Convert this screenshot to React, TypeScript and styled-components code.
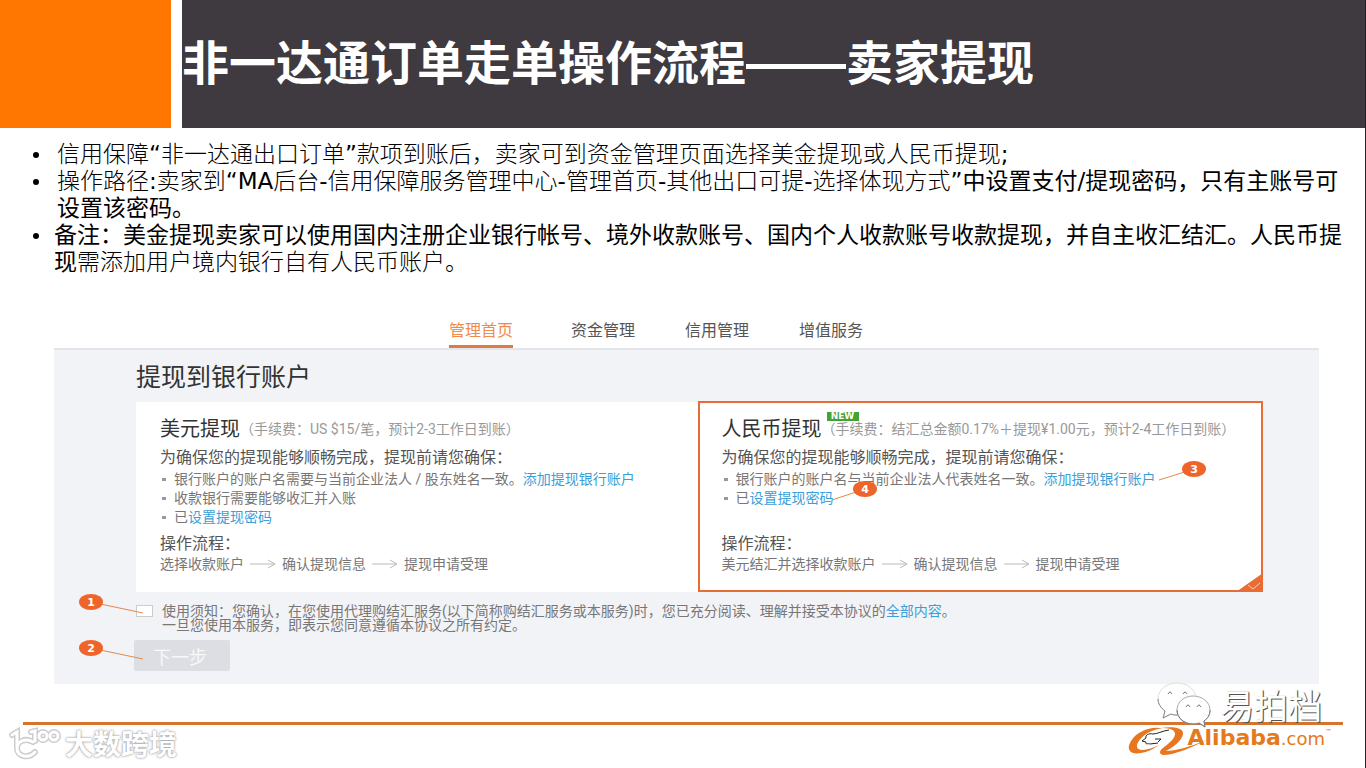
import React from 'react';
import styled, { createGlobalStyle } from 'styled-components';

const cjk = '"Noto Sans CJK SC", sans-serif';

const GlobalStyle = createGlobalStyle`
  * { box-sizing: border-box; }
  body {
    margin: 0;
    background: #fff;
    color: #000;
    font-family: "DejaVu Sans", ${cjk};
  }
  h1, h2, h3, p, ul, ol { margin: 0; padding: 0; }
  ul, ol { list-style: none; }
  a { text-decoration: none; }
`;

const Slide = styled.div`
  position: relative;
  min-height: 100vh;
  display: flex;
  flex-direction: column;
  border-right: 1px solid #222;
`;

const Header = styled.header`
  display: flex;
  gap: 11px;
  height: 128px;
`;

const Accent = styled.div`
  flex: 0 0 171px;
  background: #ff7600;
`;

const TitleBar = styled.div`
  flex: 1;
  padding-top: 26px;
  background: #3e3a40;
`;

const Title = styled.h1`
  color: #fff;
  font: 700 47px/68px ${cjk};
  white-space: nowrap;
`;

const Dash = styled.span`
  font-family: "Liberation Sans", sans-serif;
  font-size: 50px;
  line-height: 1;
`;

const Notes = styled.ul`
  padding: 13px 0 0 30px;
  font-size: 23px;
  line-height: 27px;
`;

const Note = styled.li<{ $indent: number }>`
  position: relative;
  padding-left: ${(p) => p.$indent}px;
  white-space: nowrap;
  font-weight: 300;
  &::before {
    content: '';
    position: absolute;
    left: 3px;
    top: 11px;
    width: 6px;
    height: 6px;
    border-radius: 50%;
    background: #000;
  }
`;

const Strong = styled.span`
  font-weight: 400;
`;

const Shot = styled.section`
  margin: 38px 46px 0 54px;
  font-family: Roboto, ${cjk};
  font-size: 14px;
  line-height: 18px;
  color: #777;
`;

const Tabs = styled.nav`
  display: flex;
  gap: 50px;
  padding-left: 395px;
  height: 34px;
`;

const Tab = styled.a<{ $active?: boolean }>`
  width: 64px;
  padding-top: 6px;
  font-size: 16px;
  line-height: 22px;
  white-space: nowrap;
  color: ${(p) => (p.$active ? '#f08a4b' : '#555')};
  border-bottom: 3px solid ${(p) => (p.$active ? '#e07b45' : 'transparent')};
  &:first-child { margin-right: 8px; }
`;

const Panel = styled.div`
  position: relative;
  height: 336px;
  padding: 16px 56px 0 82px;
  background: #f2f3f7;
  border-top: 2px solid #e4e5e8;
`;

const PanelTitle = styled.h2`
  color: #333;
  font-size: 25px;
  font-weight: 400;
  line-height: 24px;
`;

const Cards = styled.div`
  display: grid;
  grid-template-columns: 1fr 1fr;
  height: 190px;
  margin-top: 12px;
`;

const Card = styled.article<{ $selected?: boolean }>`
  position: relative;
  padding: ${(p) => (p.$selected ? 13 : 12)}px 0 0 22px;
  margin: ${(p) => (p.$selected ? '-1px 0 0 -2px' : 0)};
  background: #fff;
  border: 2px solid ${(p) => (p.$selected ? '#e96c35' : '#fff')};
  white-space: nowrap;
`;

const CardHead = styled.div`
  position: relative;
  display: flex;
  align-items: center;
  height: 26px;
`;

const CardTitle = styled.h3`
  color: #333;
  font-size: 20px;
  font-weight: 400;
`;

const Fee = styled.span`
  color: #999;
  font-size: 14px;
`;

const NewTag = styled.span`
  position: absolute;
  left: 105px;
  top: -4px;
  width: 32px;
  height: 9px;
  background: #43a234;
  color: #fff;
  font: 700 9px/9px "DejaVu Sans", sans-serif;
  text-align: center;
`;

const Lead = styled.p`
  color: #555;
  font-size: 16px;
  line-height: 20px;
  margin-top: 6px;
`;

const Points = styled.ul`
  height: 58px;
  margin-top: 2px;
`;

const Point = styled.li`
  position: relative;
  padding-left: 14px;
  line-height: 19px;
  &::before {
    content: '';
    position: absolute;
    left: 2px;
    top: 8px;
    width: 4px;
    height: 3px;
    background: #999;
  }
`;

const Link = styled.a`
  color: #3a9fd8;
`;

const Steps = styled.ol`
  display: flex;
  align-items: center;
  gap: 38px;
  margin-top: 1px;
`;

const Step = styled.li`
  position: relative;
`;

const ArrowMark = styled.svg`
  position: absolute;
  right: -32px;
  top: 4px;
`;

const Corner = styled.svg`
  position: absolute;
  right: -2px;
  bottom: -2px;
`;

const Agreement = styled.div`
  display: flex;
  gap: 9px;
  margin-top: 12px;
  line-height: 14px;
  white-space: nowrap;
`;

const Check = styled.input`
  appearance: none;
  width: 17px;
  height: 12px;
  margin: 1px 0 0;
  background: #fff;
  border: 1px solid #ccc;
`;

const Next = styled.button`
  display: block;
  width: 96px;
  height: 31px;
  margin: 8px 0 0 -2px;
  padding: 0 4px 0 0;
  border: 0;
  border-radius: 2px;
  background: #dcdee3;
  color: #f7f8fa;
  font: 400 18px/28px ${cjk};
`;

const Callout = styled.svg`
  position: absolute;
  overflow: visible;
  text {
    fill: #fff;
    font: 700 11px "DejaVu Sans", sans-serif;
    text-anchor: middle;
  }
`;

const Footer = styled.footer`
  position: relative;
  height: 84px;
  padding: 38px 22px 0 23px;
`;

const Rule = styled.div`
  height: 3px;
  background: #d9722a;
`;

const WeChatMark = styled.div`
  position: absolute;
  right: 43px;
  top: -4px;
  display: flex;
  align-items: center;
  gap: 8px;
  color: #fff;
  font: 400 34px/50px ${cjk};
  text-shadow: 1px 1px 0 #555, 1px 0 1px #888;
`;

const Alibaba = styled.div`
  position: absolute;
  right: 33px;
  top: 42px;
  display: flex;
  align-items: baseline;
  color: #e47a1c;
  font: 400 18px/24px "DejaVu Sans", sans-serif;
`;

const AlibabaMark = styled.svg`
  align-self: flex-start;
  overflow: visible;
`;

const Brand = styled.b`
  font-size: 22px;
`;

const Trade = styled.span`
  align-self: flex-start;
  font-size: 7px;
  line-height: 12px;
`;

const Cross = styled.div`
  position: absolute;
  left: 8px;
  top: 38px;
  display: flex;
  gap: 3px;
  align-items: center;
  color: #fff;
  font: 700 28px/42px ${cjk};
  text-shadow: 0 0 2px #999, 0 0 3px #bbb;
`;

const Arrow = () => (
  <ArrowMark width="26" height="10" viewBox="0 0 26 10" fill="none" stroke="#bbb" aria-hidden="true">
    <path d="M0 5H25M18 1L25 5L18 9" />
  </ArrowMark>
);

type PinProps = { n: number; x: number; y: number; dx: number; dy: number };

const Pin = ({ n, x, y, dx, dy }: PinProps) => (
  <Callout style={{ left: x, top: y }} width="1" height="1">
    <path d={`M0 0L${dx} ${dy}`} stroke="#e08a50" />
    <ellipse rx="12" ry="8" fill="#ed652b" />
    <text y="4">{n}</text>
  </Callout>
);

const crossStrokes = 'M4 10L9 7V22M25 17C17 12 9 17 9 23C9 32 21 34 27 27M23 7L27 6V16';

export default function App() {
  return (
    <Slide>
      <GlobalStyle />
      <Header>
        <Accent />
        <TitleBar>
          <Title>非一达通订单走单操作流程<Dash>——</Dash>卖家提现</Title>
        </TitleBar>
      </Header>

      <Notes>
        <Note $indent={27}>
          信用保障<Strong>“</Strong>非一达通出口订单<Strong>”</Strong>款项到账后，卖家可到资金管理页面选择美金提现或人民币提现<Strong>;</Strong>
        </Note>
        <Note $indent={27}>
          操作路径<Strong>:</Strong>卖家到<Strong>“MA</Strong>后台<Strong>-</Strong>信用保障服务管理中心<Strong>-</Strong>管理首页<Strong>-</Strong>其他出口可提<Strong>-</Strong>选择体现方式
          <Strong>”中设置支付/提现密码，只有主账号可<br />设置该密码。</Strong>
        </Note>
        <Note $indent={24}>
          <Strong>备注：美金提现卖家可以使用国内注册企业银行帐号、境外收款账号、国内个人收款账号收款提现，并自主收汇结汇。人民币提<br />现</Strong>
          需添加用户境内银行自有人民币账户。
        </Note>
      </Notes>

      <Shot>
        <Tabs>
          <Tab href="#home" $active>管理首页</Tab>
          <Tab href="#funds">资金管理</Tab>
          <Tab href="#credit">信用管理</Tab>
          <Tab href="#services">增值服务</Tab>
        </Tabs>
        <Panel>
          <PanelTitle>提现到银行账户</PanelTitle>
          <Cards>
            <Card>
              <CardHead>
                <CardTitle>美元提现</CardTitle>
                <Fee>（手续费：US $15/笔，预计2-3工作日到账）</Fee>
              </CardHead>
              <Lead>为确保您的提现能够顺畅完成，提现前请您确保：</Lead>
              <Points>
                <Point>银行账户的账户名需要与当前企业法人 / 股东姓名一致。<Link href="#account">添加提现银行账户</Link></Point>
                <Point>收款银行需要能够收汇并入账</Point>
                <Point>已<Link href="#password">设置提现密码</Link></Point>
              </Points>
              <Lead>操作流程：</Lead>
              <Steps>
                <Step>选择收款账户<Arrow /></Step>
                <Step>确认提现信息<Arrow /></Step>
                <Step>提现申请受理</Step>
              </Steps>
            </Card>
            <Card $selected>
              <CardHead>
                <CardTitle>人民币提现</CardTitle>
                <NewTag>NEW</NewTag>
                <Fee>（手续费：结汇总金额0.17%＋提现¥1.00元，预计2-4工作日到账）</Fee>
              </CardHead>
              <Lead>为确保您的提现能够顺畅完成，提现前请您确保：</Lead>
              <Points>
                <Point>银行账户的账户名与当前企业法人代表姓名一致。<Link href="#account">添加提现银行账户</Link></Point>
                <Point>已<Link href="#password">设置提现密码</Link></Point>
              </Points>
              <Lead>操作流程：</Lead>
              <Steps>
                <Step>美元结汇并选择收款账户<Arrow /></Step>
                <Step>确认提现信息<Arrow /></Step>
                <Step>提现申请受理</Step>
              </Steps>
              <Corner width="27" height="19" viewBox="0 0 27 19" aria-hidden="true">
                <path d="M27 0V19H0Z" fill="#e96c35" />
                <path d="M12 12L17 16L24 10" fill="none" stroke="#fbd0b8" />
              </Corner>
              <Pin n={3} x={494} y={66} dx={-35} dy={11} />
              <Pin n={4} x={165} y={86} dx={-33} dy={11} />
            </Card>
          </Cards>
          <Agreement>
            <Check type="checkbox" id="agree" />
            <label htmlFor="agree">
              使用须知：您确认，在您使用代理购结汇服务(以下简称购结汇服务或本服务)时，您已充分阅读、理解并接受本协议的<Link href="#terms">全部内容</Link>。
              <br />一旦您使用本服务，即表示您同意遵循本协议之所有约定。
            </label>
          </Agreement>
          <Next type="button">下一步</Next>
          <Pin n={1} x={37} y={252} dx={52} dy={11} />
          <Pin n={2} x={37} y={298} dx={52} dy={11} />
        </Panel>
      </Shot>

      <Footer>
        <Rule />
        <WeChatMark>
          <svg width="56" height="46" viewBox="0 0 56 46" fill="#fff" aria-hidden="true">
            <path d="M21 1C10 1 2 8 2 17c0 5 3 9 7 12l-2 7 8-4c2 1 4 1 6 1 11 0 19-7 19-16S32 1 21 1Z" stroke="#ddd" />
            <path d="M2 17c0 5 3 9 7 12l-2 7 8-4c2 1 4 1 6 1" fill="none" stroke="#888" />
            <path d="M37 14c-9 0-16 6-16 14s7 14 16 14c2 0 4 0 6-1l6 4-1-6c4-3 6-6 6-11 0-8-8-14-17-14Z" stroke="#aaa" />
            <path d="M21 28c0 8 7 14 16 14 2 0 4 0 6-1l6 4-1-6c4-3 6-6 6-11" fill="none" stroke="#777" />
            <path d="M12 12q2-4 4 0M27 12q2-4 4 0M30 25q2-4 4 0M41 25q2-4 4 0" fill="none" stroke="#777" />
          </svg>
          易拍档
        </WeChatMark>
        <Alibaba>
          <AlibabaMark width="60" height="30" viewBox="0 0 60 30" aria-hidden="true">
            <path d="M36 3C25-1 9 5 3 15C-3 25 4 29 13 27C19 26 26 23 31 19C22 24 10 26 9 21C8 16 16 8 24 5C29 3 33 2 36 3Z" fill="#e8761e" />
            <path d="M33 2C46 0 56 2 55 8C54 15 45 21 38 25C47 25 62 21 78 14C65 21 47 29 35 29C31 28 31 25 35 22C42 17 48 11 47 7C46 3 40 2 33 2Z" fill="#e8761e" />
            <path d="M41 4C34 5 29 8 25 8C21 7 17 9 18 12L14 15L18 16C17 19 20 17 22 18L30 17M27 13H33L30 16" fill="none" stroke="#222" />
          </AlibabaMark>
          <Brand>Alibaba</Brand>.com<Trade>™</Trade>
        </Alibaba>
        <Cross>
          <svg width="54" height="36" viewBox="0 0 54 36" fill="none" strokeLinecap="round" aria-hidden="true">
            <g stroke="#ccc" strokeWidth="6">
              <path d={crossStrokes} />
              <circle cx="35" cy="11" r="4" />
              <circle cx="46" cy="11" r="4" />
            </g>
            <g stroke="#fff" strokeWidth="3">
              <path d={crossStrokes} />
              <circle cx="35" cy="11" r="4" />
              <circle cx="46" cy="11" r="4" />
            </g>
          </svg>
          大数跨境
        </Cross>
      </Footer>
    </Slide>
  );
}
